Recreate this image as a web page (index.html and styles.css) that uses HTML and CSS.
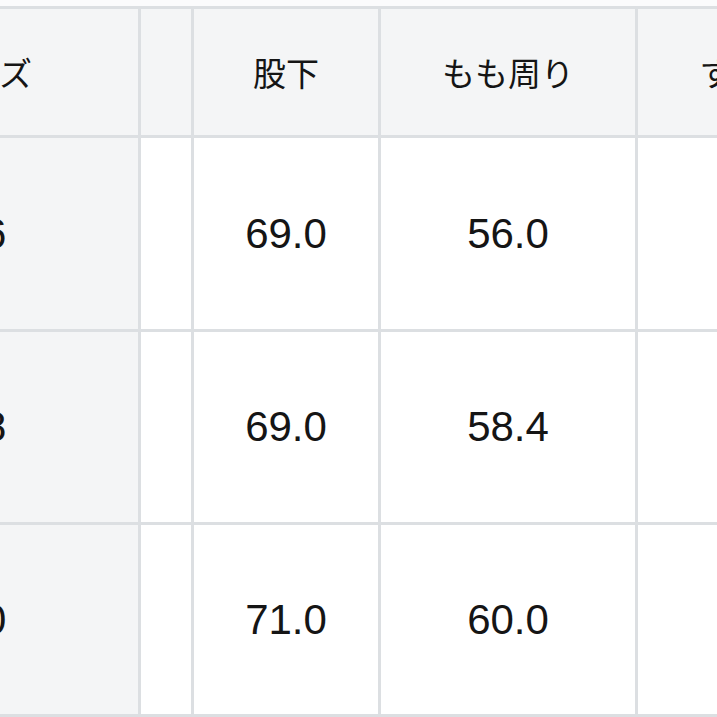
FILE: index.html
```html
<!DOCTYPE html>
<html lang="ja">
<head>
<meta charset="utf-8">
<link rel="stylesheet" href="styles.css">
</head>
<body>
<div class="viewport">
  <div class="chart" role="table">
    <div class="cell head size" role="columnheader">サイズ</div>
    <div class="cell head" role="columnheader"></div>
    <div class="cell head" role="columnheader">股下</div>
    <div class="cell head" role="columnheader">もも周り</div>
    <div class="cell head" role="columnheader">すそ周り</div>

    <div class="cell size num" role="rowheader">26</div>
    <div class="cell num" role="cell"></div>
    <div class="cell num" role="cell">69.0</div>
    <div class="cell num" role="cell">56.0</div>
    <div class="cell num" role="cell">19.5</div>

    <div class="cell size num" role="rowheader">28</div>
    <div class="cell num" role="cell"></div>
    <div class="cell num" role="cell">69.0</div>
    <div class="cell num" role="cell">58.4</div>
    <div class="cell num" role="cell">20.0</div>

    <div class="cell size num" role="rowheader">30</div>
    <div class="cell num" role="cell"></div>
    <div class="cell num" role="cell">71.0</div>
    <div class="cell num" role="cell">60.0</div>
    <div class="cell num" role="cell">20.5</div>
  </div>
</div>
</body>
</html>
```

FILE: styles.css
```css
html, body {
  margin: 0;
  padding: 0;
  background: #fbfbfc;
}
.viewport {
  width: 717px;
  height: 717px;
  overflow: hidden;
  padding-top: 6px;
  box-sizing: border-box;
}
.chart {
  display: grid;
  grid-template-columns: 316px 50px 184px 254px 255px;
  grid-template-rows: 126px 191px 190px 189px;
  gap: 3px;
  padding: 3px;
  background: #dcdfe2;
  margin-left: -181px;
  width: max-content;
}
.cell {
  display: flex;
  align-items: center;
  justify-content: center;
  background: #ffffff;
  color: #151515;
}
.head {
  background: #f4f5f6;
  font-family: "Noto Sans CJK JP", "Noto Sans", sans-serif;
  font-size: 33px;
  font-weight: 400;
}
.num {
  font-family: "Liberation Sans", Arial, sans-serif;
  font-size: 42px;
}
.size {
  background: #f4f5f6;
  padding-left: 6px;
}
```
